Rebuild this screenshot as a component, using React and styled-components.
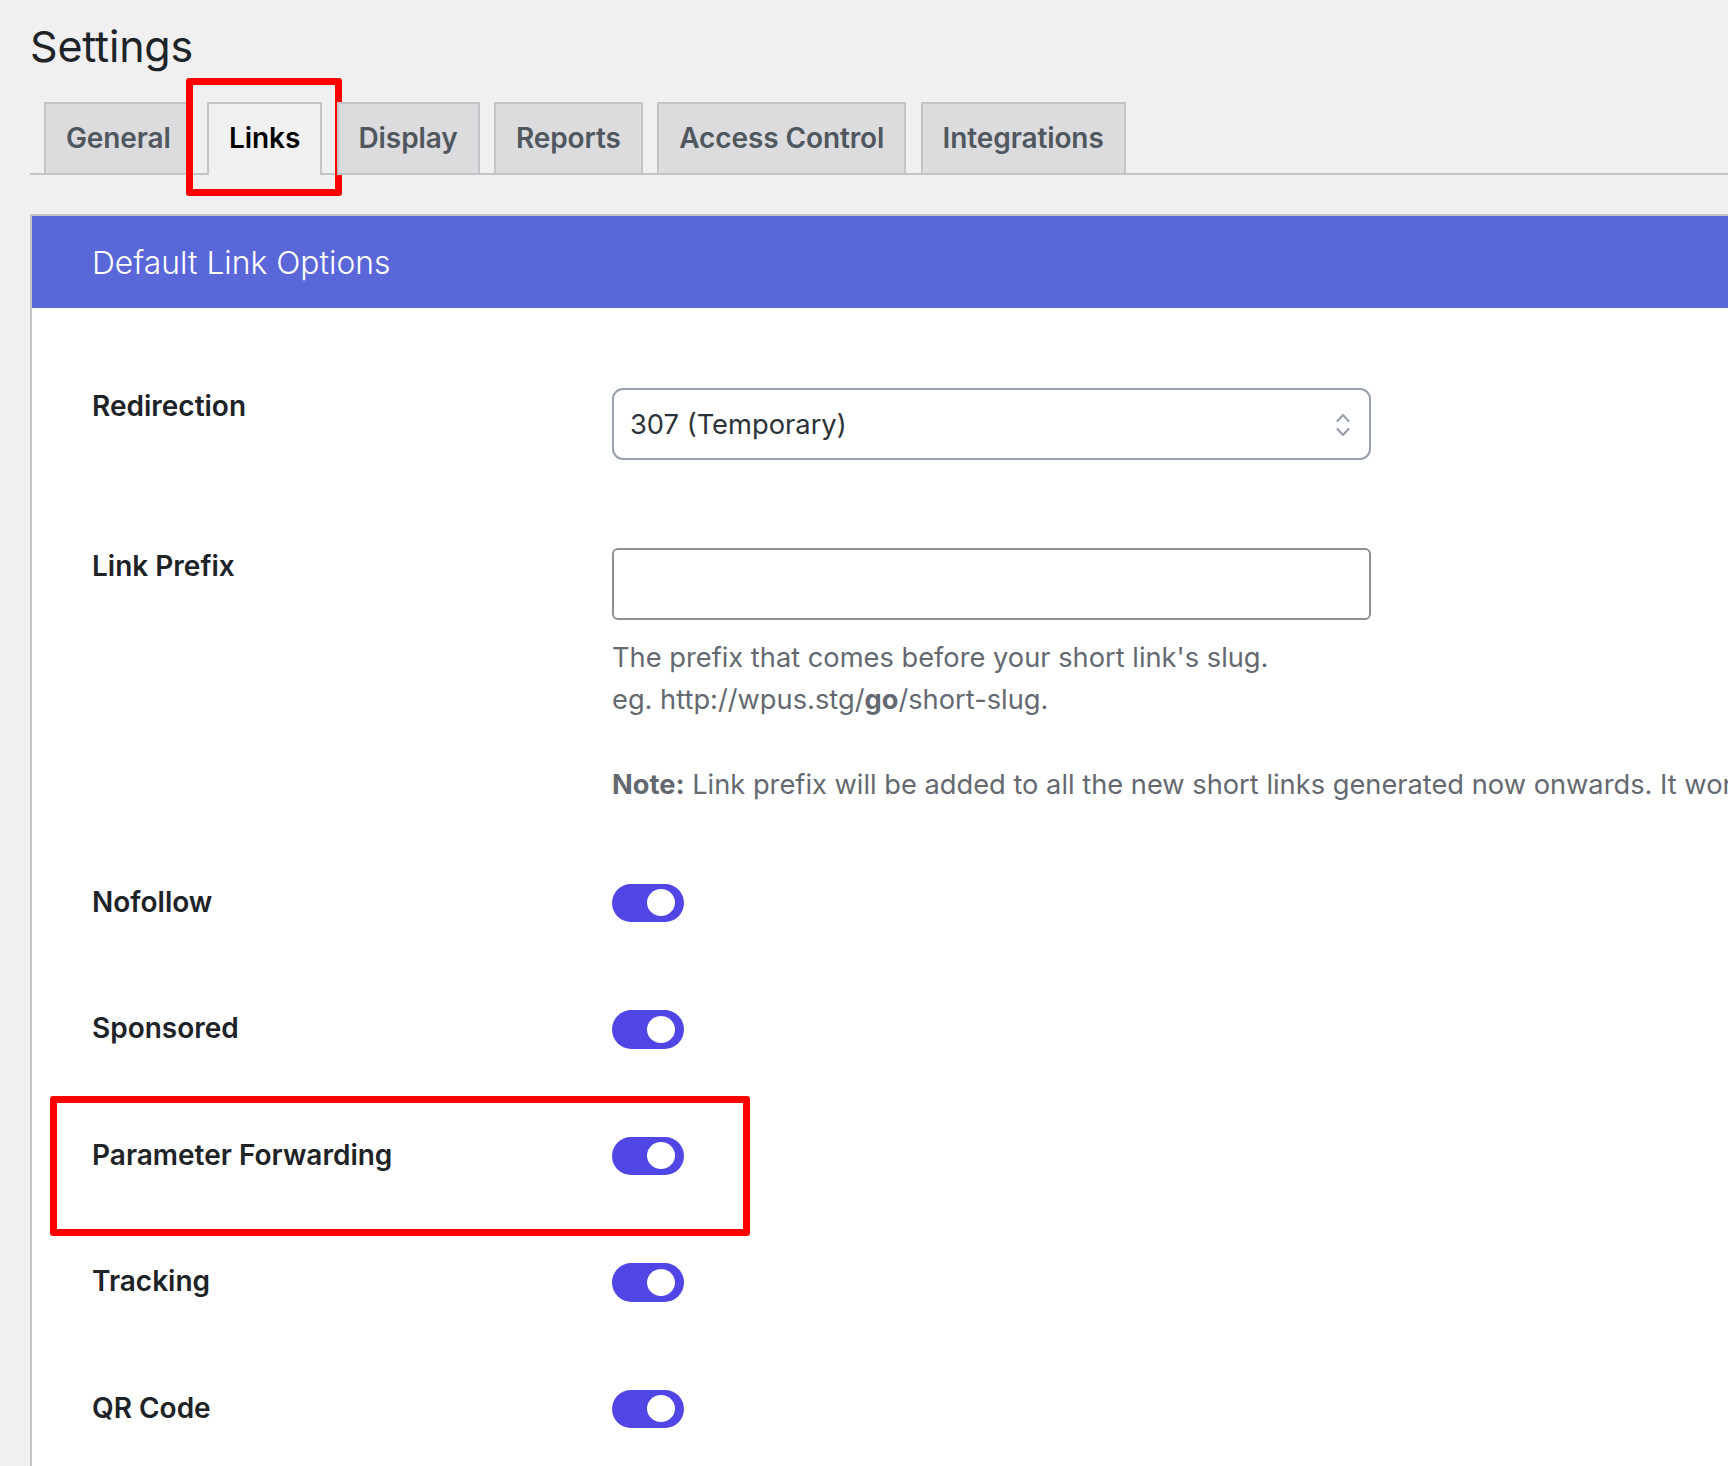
import React from "react";
import styled, { createGlobalStyle } from "styled-components";

const GlobalStyle = createGlobalStyle`
  * { box-sizing: border-box; }
  html, body { margin: 0; height: 100%; }
  body {
    background: #f0f0f1;
    font-family: Inter, "Liberation Sans", sans-serif;
    color: #1d2327;
    overflow: hidden;
  }
`;

const TABS = ["General", "Links", "Display", "Reports", "Access Control", "Integrations"];
const TOGGLES = ["Nofollow", "Sponsored", "Parameter Forwarding", "Tracking", "QR Code"];

function Chevrons() {
  return (
    <ChevronIcon viewBox="0 0 14 24" fill="none" stroke="#98a1ad" strokeWidth="2.2" strokeLinecap="round" strokeLinejoin="round">
      <path d="M1.5 8 7 2l5.5 6" />
      <path d="M1.5 16 7 22l5.5-6" />
    </ChevronIcon>
  );
}

function ToggleRow({ label, marked }) {
  return (
    <Row>
      <Label>{label}</Label>
      <Toggle>
        <Knob />
      </Toggle>
      {marked && <ParamMark />}
    </Row>
  );
}

export default function App() {
  return (
    <Page>
      <GlobalStyle />
      <Title>Settings</Title>
      <TabBar>
        {TABS.map((tab) => (
          <Tab key={tab} $active={tab === "Links"}>
            {tab}
            {tab === "Links" && <TabMark />}
          </Tab>
        ))}
      </TabBar>
      <Panel>
        <PanelHeader>Default Link Options</PanelHeader>
        <Form>
          <Row>
            <Label>Redirection</Label>
            <SelectBox>
              307 (Temporary)
              <Chevrons />
            </SelectBox>
          </Row>
          <Row>
            <Label>Link Prefix</Label>
            <Field>
              <TextInput type="text" />
              <Help>
                The prefix that comes before your short link's slug.
                <br />
                eg. http://wpus.stg/<b>go</b>/short-slug.
              </Help>
              <Note>
                <b>Note:</b> Link prefix will be added to all the new short links generated now onwards. It won't affect existing links.
              </Note>
            </Field>
          </Row>
          {TOGGLES.map((label) => (
            <ToggleRow key={label} label={label} marked={label === "Parameter Forwarding"} />
          ))}
        </Form>
      </Panel>
    </Page>
  );
}

const Page = styled.div`
  position: relative;
  display: flex;
  flex-direction: column;
  width: 1728px;
  height: 1466px;
  overflow: hidden;
  padding: 18px 0 0 30px;
`;

const Title = styled.h1`
  margin: 0;
  font-size: 43px;
  font-weight: 400;
  line-height: 56px;
  letter-spacing: -0.2px;
  color: #1d2327;
`;

const TabBar = styled.div`
  display: flex;
  flex: none;
  gap: 14.3px;
  height: 73px;
  margin-top: 28px;
  padding-left: 14px;
  border-bottom: 2px solid #c3c4c7;
`;

const Tab = styled.div`
  position: relative;
  height: 73px;
  padding: 0 20px ${(p) => (p.$active ? "3px" : "1px")};
  display: flex;
  align-items: center;
  border: 2px solid #c3c4c7;
  border-bottom: ${(p) => (p.$active ? "none" : "2px solid #c3c4c7")};
  background: ${(p) => (p.$active ? "#f0f0f1" : "#dcdcde")};
  color: ${(p) => (p.$active ? "#000" : "#50575e")};
  font-size: 28px;
  font-weight: 600;
  letter-spacing: -0.1px;
  white-space: nowrap;
`;

const TabMark = styled.span`
  position: absolute;
  left: -23px;
  right: -22px;
  top: -26px;
  height: 118px;
  border: 7px solid #ff0000;
  border-radius: 3px;
`;

const Panel = styled.div`
  flex: 1;
  width: 1800px;
  margin-top: 39px;
  border-top: 2px solid #c3c4c7;
  border-left: 2px solid #c3c4c7;
  background: #fff;
`;

const PanelHeader = styled.div`
  height: 92px;
  padding-left: 60px;
  display: flex;
  align-items: center;
  background: #5a67d8;
  color: #fff;
  font-size: 31.8px;
  font-weight: 300;
`;

const Form = styled.div`
  display: flex;
  flex-direction: column;
  gap: 88px;
  padding: 80px 0 0 60px;
`;

const Row = styled.div`
  position: relative;
  display: flex;
`;

const Label = styled.div`
  width: 520px;
  flex: none;
  font-size: 28px;
  font-weight: 600;
  line-height: 36px;
  color: #1d2327;
`;

const Field = styled.div`
  display: flex;
  flex-direction: column;
`;

const SelectBox = styled.div`
  width: 759px;
  height: 72px;
  padding: 0 16px;
  display: flex;
  align-items: center;
  justify-content: space-between;
  border: 2px solid #98a1ad;
  border-radius: 11px;
  background: #fff;
  color: #2c3338;
  font-size: 27.3px;
`;

const ChevronIcon = styled.svg`
  width: 14px;
  height: 24px;
  margin: 2px 3px 0 0;
`;

const TextInput = styled.input`
  width: 759px;
  height: 72px;
  border: 2px solid #8c8f94;
  border-radius: 6px;
  background: #fff;
  outline: none;
`;

const Help = styled.div`
  margin-top: 17px;
  font-size: 27.25px;
  line-height: 42px;
  color: #646970;
  white-space: nowrap;
`;

const Note = styled(Help)`
  margin-top: 42.5px;
  margin-bottom: -10px;
`;

const Toggle = styled.div`
  width: 72px;
  height: 38.5px;
  padding-right: 9.5px;
  display: flex;
  align-items: center;
  justify-content: flex-end;
  border-radius: 19.5px;
  background: #4f46e5;
`;

const Knob = styled.span`
  width: 28px;
  height: 27px;
  border-radius: 50%;
  background: #fff;
`;

const ParamMark = styled.span`
  position: absolute;
  left: -42px;
  top: -41px;
  width: 700px;
  height: 140px;
  border: 7.5px solid #ff0000;
  border-radius: 3px;
`;
